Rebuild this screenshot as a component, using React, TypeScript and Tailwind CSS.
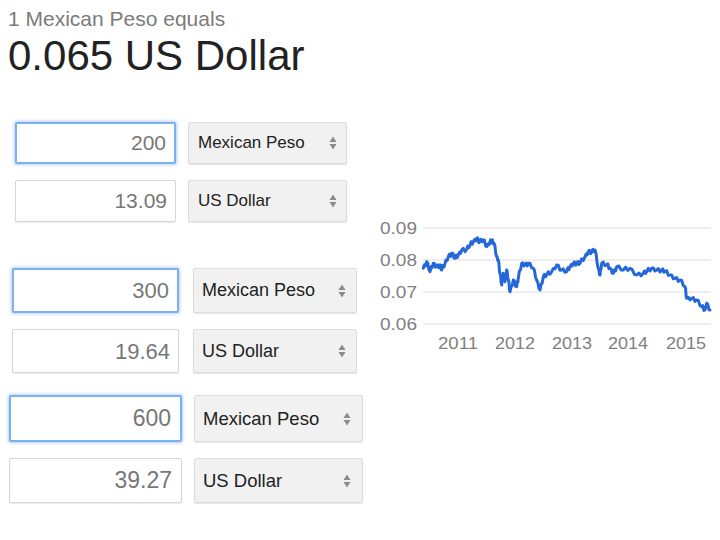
import React from "react";

type Row = { value: string; currency: string; focused?: boolean; h: string };

interface Group {
  pl: string;
  inputW: string;
  selW: string;
  gap: string;
  rowGap: string;
  mt: string;
  num: string;
  sel: string;
  pr: string;
  rows: Row[];
}

const groups: Group[] = [
  {
    pl: "pl-[15px]",
    inputW: "w-[161px]",
    selW: "w-[159px]",
    gap: "gap-[12px]",
    rowGap: "gap-[16px]",
    mt: "mt-0",
    num: "text-[21px]",
    sel: "text-[17px] pl-[9px] pr-[9px]",
    pr: "pr-[8px]",
    rows: [
      { value: "200", currency: "Mexican Peso", focused: true, h: "h-[42px]" },
      { value: "13.09", currency: "US Dollar", h: "h-[42px]" },
    ],
  },
  {
    pl: "pl-[12px]",
    inputW: "w-[167px]",
    selW: "w-[164px]",
    gap: "gap-[14px]",
    rowGap: "gap-[16px]",
    mt: "mt-[46px]",
    num: "text-[22px]",
    sel: "text-[18px] pl-[8px] pr-[10px]",
    pr: "pr-[8px]",
    rows: [
      { value: "300", currency: "Mexican Peso", focused: true, h: "h-[45px]" },
      { value: "19.64", currency: "US Dollar", h: "h-[44px]" },
    ],
  },
  {
    pl: "pl-[9px]",
    inputW: "w-[173px]",
    selW: "w-[169px]",
    gap: "gap-[12px]",
    rowGap: "gap-[16px]",
    mt: "mt-[22px]",
    num: "text-[23px]",
    sel: "text-[18.5px] pl-[8px] pr-[11px]",
    pr: "pr-[9px]",
    rows: [
      { value: "600", currency: "Mexican Peso", focused: true, h: "h-[47px]" },
      { value: "39.27", currency: "US Dollar", h: "h-[45px]" },
    ],
  },
];

// points read off the chart (zoomed coords), mapped to page pixels below
const raw: [number, number][] = [
  [160, 175], [170, 155], [180, 185], [190, 160], [200, 170], [210, 165], [215, 180],
  [225, 160], [235, 140], [245, 130], [255, 145], [265, 135], [275, 120], [290, 118],
  [300, 105], [310, 95], [320, 85], [330, 95], [340, 90], [350, 110], [360, 95],
  [365, 92], [372, 100], [380, 140], [385, 150], [390, 190], [395, 225], [400, 190],
  [405, 215], [410, 180], [415, 210], [420, 245], [430, 210], [440, 230], [445, 205],
  [455, 160], [465, 165], [475, 160], [490, 175], [500, 210], [510, 240], [520, 200],
  [530, 195], [545, 185], [560, 165], [575, 180], [590, 185], [600, 170], [610, 160],
  [620, 160], [630, 160], [645, 140], [655, 125], [665, 125], [675, 120], [685, 175],
  [690, 195], [695, 160], [710, 165], [720, 175], [730, 190], [740, 170], [760, 180],
  [780, 175], [800, 195], [820, 190], [830, 185], [845, 175], [860, 180], [875, 180],
  [885, 185], [900, 195], [915, 205], [930, 210], [945, 230], [950, 265], [965, 265],
  [980, 270], [995, 290], [1005, 300], [1010, 280], [1020, 300],
];

// add a little day-to-day wobble between read points
const wobble = [1.6, -1.4, 2, -1.8, 1.2, -2.2, 1.5, -1];
const pts: string[] = [];
raw.forEach(([x, y], i) => {
  const px = 370 + x / 3;
  const py = 210 + y / 3;
  pts.push(`${px.toFixed(1)},${py.toFixed(1)}`);
  const next = raw[i + 1];
  if (next) {
    const nx = 370 + next[0] / 3;
    const ny = 210 + next[1] / 3;
    for (let k = 1; k <= 2; k++) {
      const t = k / 3;
      const wx = px + (nx - px) * t;
      const wy = py + (ny - py) * t + wobble[(i * 2 + k) % wobble.length];
      pts.push(`${wx.toFixed(1)},${wy.toFixed(1)}`);
    }
  }
});
const points = pts.join(" ");

const Arrows = () => (
  <svg width="8" height="14" viewBox="0 0 8 14" className="shrink-0">
    <polygon points="0.5,6 4,0.5 7.5,6" fill="#8c8c8c" />
    <polygon points="0.5,8 7.5,8 4,13.5" fill="#8c8c8c" />
  </svg>
);

const Chart = () => {
  const grid = [
    { y: 228, label: "0.09" },
    { y: 260, label: "0.08" },
    { y: 292, label: "0.07" },
    { y: 324, label: "0.06" },
  ];
  const years = [
    { x: 438, label: "2011" },
    { x: 495, label: "2012" },
    { x: 552, label: "2013" },
    { x: 608, label: "2014" },
    { x: 666, label: "2015" },
  ];
  return (
    <svg width="340" height="140" viewBox="375 215 340 140" className="block">
      {grid.map((g) => (
        <g key={g.label}>
          <line x1="423" x2="711" y1={g.y} y2={g.y} stroke="#dedede" strokeWidth="1.2" />
          <text
            x="380"
            y={g.y + 6}
            fontSize="16"
            fill="#808080"
            fontFamily="'Liberation Sans', Arial, sans-serif"
            textLength="37"
            lengthAdjust="spacingAndGlyphs"
          >
            {g.label}
          </text>
        </g>
      ))}
      {years.map((y) => (
        <text
          key={y.label}
          x={y.x}
          y="349"
          fontSize="16"
          fill="#808080"
          fontFamily="'Liberation Sans', Arial, sans-serif"
          textLength="40"
          lengthAdjust="spacingAndGlyphs"
        >
          {y.label}
        </text>
      ))}
      <polyline points={points} fill="none" stroke="#2467d8" strokeWidth="3" strokeLinejoin="round" strokeLinecap="round" />
    </svg>
  );
};

export default function App() {
  return (
    <div className="w-[720px] h-[540px] bg-white overflow-hidden font-['Liberation_Sans',Arial,sans-serif]">
      <div className="pl-[8px] pt-[7px]">
        <div className="text-[21px] leading-[24px] text-[#7b7b7b]">1 Mexican Peso equals</div>
        <div className="mt-[1px] text-[42px] leading-[48px] text-[#222]">0.065 US Dollar</div>
      </div>

      <div className="flex mt-[42px]">
        <div className="w-[375px] shrink-0 flex flex-col">
          {groups.map((g, gi) => (
            <div key={gi} className={`flex flex-col ${g.rowGap} ${g.mt} ${g.pl}`}>
              {g.rows.map((r) => (
                <div key={r.value} className={`flex ${g.gap} ${r.h}`}>
                  <div
                    className={`${g.inputW} h-full flex items-center justify-end ${g.pr} ${g.num} text-[#777] bg-white rounded-[2px] ${
                      r.focused
                        ? "border-2 border-[#7eb0f0] shadow-[0_0_3px_1px_rgba(110,165,235,0.5)]"
                        : "border border-[#d6d6d6] shadow-[0_1px_1px_rgba(0,0,0,0.08)]"
                    }`}
                  >
                    {r.value}
                  </div>
                  <div
                    className={`${g.selW} h-full flex items-center justify-between ${g.sel} text-[#222] bg-[#f1f1f1] border border-[#dcdcdc] rounded-[2px] shadow-[0_1px_1px_rgba(0,0,0,0.1)]`}
                  >
                    <span>{r.currency}</span>
                    <Arrows />
                  </div>
                </div>
              ))}
            </div>
          ))}
        </div>
        <div className="mt-[93px]">
          <Chart />
        </div>
      </div>
    </div>
  );
}
